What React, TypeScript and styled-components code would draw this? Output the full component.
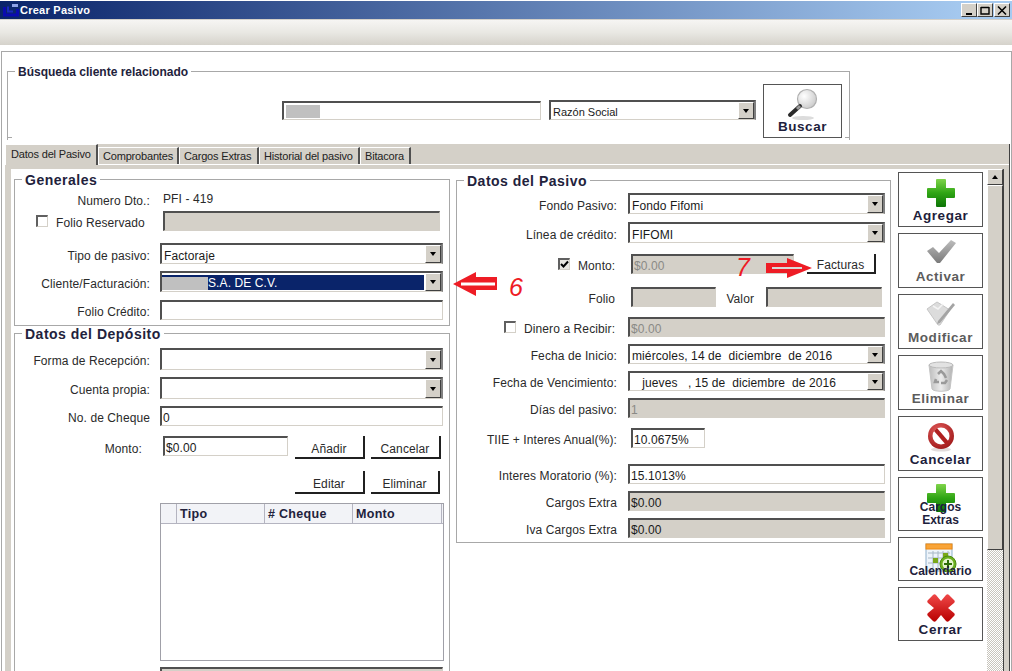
import React from "react";
import styled, { createGlobalStyle } from "styled-components";

const Global = createGlobalStyle`
  html, body { margin: 0; padding: 0; background: #fff; }
  * { box-sizing: border-box; }
  #root { width: 1012px; height: 671px; overflow: hidden; }
`;

const FONT = `"Liberation Sans", Arial, sans-serif`;

const Win = styled.div`
  position: relative;
  width: 1012px;
  height: 671px;
  overflow: hidden;
  display: flex;
  flex-direction: column;
  background: #fff;
  font-family: ${FONT};
  font-size: 12px;
  letter-spacing: 0.1px;
  color: #2a2a2a;
  padding-top: 1px;
`;

const TitleBar = styled.div`
  height: 19px;
  flex: none;
  display: flex;
  align-items: center;
  padding: 0 2px 0 3px;
  background: linear-gradient(90deg, #0a246a 0%, #a6caf0 96%);
  border-bottom: 1px solid #d4d0c8;
`;
const TitleText = styled.span`
  color: #fff;
  font-weight: 700;
  font-size: 11px;
  letter-spacing: 0.25px;
  margin-left: 1px;
  flex: 1;
`;
const WinBtn = styled.div<{ $ml?: number }>`
  width: 16px;
  height: 14px;
  margin-left: ${(p) => p.$ml ?? 0}px;
  background: #d4d0c8;
  border: 1px solid;
  border-color: #fff #404040 #404040 #fff;
  display: flex;
  align-items: center;
  justify-content: center;
`;
const Toolbar = styled.div`
  height: 25px;
  flex: none;
  background: linear-gradient(180deg, #f6f5f3 0%, #e9e8e3 50%, #d5d2cb 100%);
`;
const Body = styled.div`
  flex: 1;
  min-height: 0;
  margin: 6px 0 0 1px;
  border: 1px solid #a8a8a8;
  border-bottom: 0;
  display: flex;
  flex-direction: column;
`;

const Group = styled.fieldset<{ $w: number; $h?: number }>`
  margin: 0;
  padding: 0;
  min-width: 0;
  width: ${(p) => p.$w}px;
  ${(p) => (p.$h ? `height: ${p.$h}px;` : "")}
  border: 1px solid #a8a8a8;
  flex: none;
`;
const Legend = styled.legend`
  margin-left: 7px;
  padding: 0 3px;
  font-weight: 700;
  font-size: 14px;
  height: 14px;
  line-height: 16px;
  letter-spacing: 0.5px;
  color: #22223c;
`;
const SmallLegend = styled(Legend)`
  font-size: 12px;
  letter-spacing: 0;
`;

const SearchGroup = styled(Group)`
  position: relative;
  margin: 12px 0 0 5px;
  border-bottom: 0;
  &::before, &::after {
    content: "";
    position: absolute;
    bottom: 0;
    width: 5px;
    height: 1px;
    background: #a8a8a8;
  }
  &::before { left: -1px; }
  &::after { right: -1px; }
`;
const SearchRow = styled.div`
  display: flex;
  align-items: flex-start;
  padding: 6px 0 0 274px;
`;
const RedactBlock = styled.span<{ $w: number; $lift?: boolean }>`
  display: inline-block;
  width: ${(p) => p.$w}px;
  height: 13px;
  background: #c0c0c0;
  flex: none;
  ${(p) => (p.$lift ? "margin: -3px 0 0 1px;" : "")}
`;
const SmallText = styled.span`
  font-size: 11px;
  letter-spacing: 0;
`;

const Field = styled.div<{ $w: number; $h?: number; $off?: boolean; $muted?: boolean; $ml?: number; $mt?: number }>`
  width: ${(p) => p.$w}px;
  height: ${(p) => p.$h ?? 20}px;
  margin-left: ${(p) => p.$ml ?? 0}px;
  margin-top: ${(p) => p.$mt ?? 0}px;
  flex: none;
  display: flex;
  align-items: center;
  padding: 3px 0 0 1px;
  background: ${(p) => (p.$off ? "#d4d0c8" : "#fff")};
  color: ${(p) => (p.$muted ? "#8a8a86" : "#1a1a1a")};
  border-style: solid;
  border-width: 2px 1px 1px 2px;
  border-color: #505050 #d4d0c8 #d4d0c8 #505050;
  white-space: pre;
  overflow: hidden;
`;
const SelectBox = styled.div<{ $w: number; $h?: number; $ml?: number; $mt?: number }>`
  width: ${(p) => p.$w}px;
  height: ${(p) => p.$h ?? 21}px;
  margin-left: ${(p) => p.$ml ?? 0}px;
  margin-top: ${(p) => p.$mt ?? 0}px;
  flex: none;
  display: flex;
  align-items: stretch;
  background: #fff;
  border-style: solid;
  border-width: 2px 2px 1px 2px;
  border-color: #505050 #808080 #d4d0c8 #505050;
  color: #1a1a1a;
`;
const SelectValue = styled.div<{ $sel?: boolean }>`
  flex: 1;
  min-width: 0;
  display: flex;
  align-items: center;
  white-space: pre;
  padding: 3px 0 0 2px;
  ${(p) => (p.$sel ? "background:#0a246a;color:#fff;margin:2px 1px 1px 0;padding:1px 0 0 0;overflow:visible;" : "")}
`;
const DropBtn = styled.div`
  width: 16px;
  flex: none;
  background: #d4d0c8;
  border: 1px solid;
  border-color: #fff #404040 #404040 #fff;
  display: flex;
  align-items: center;
  justify-content: center;
  &::after {
    content: "";
    border-style: solid;
    border-width: 4px 3.5px 0 3.5px;
    border-color: #000 transparent transparent transparent;
  }
`;
const Select: React.FC<{ w: number; h?: number; ml?: number; mt?: number; sel?: boolean; children?: React.ReactNode }> = ({ w, h, ml, mt, sel, children }) => (
  <SelectBox $w={w} $h={h} $ml={ml} $mt={mt}>
    <SelectValue $sel={sel}>{children}</SelectValue>
    <DropBtn />
  </SelectBox>
);

const BigBtn = styled.div<{ $off?: boolean; $h: number; $small?: boolean }>`
  width: 85px;
  height: ${(p) => p.$h}px;
  flex: none;
  background: #fff;
  border: 1px solid #555;
  display: flex;
  flex-direction: column;
  align-items: center;
  padding-top: 5px;
  font-weight: 700;
  font-size: ${(p) => (p.$small ? 12 : 13.5)}px;
  line-height: 13px;
  letter-spacing: ${(p) => (p.$small ? 0 : 0.55)}px;
  text-align: center;
  color: ${(p) => (p.$off ? "#5c5c5c" : "#1e1e3c")};
`;
const IconSlot = styled.div<{ $h: number }>`
  height: ${(p) => p.$h}px;
  flex: none;
  display: flex;
  justify-content: center;
`;
const BuscarBtn = styled(BigBtn)`
  width: 79px;
  margin-left: 7px;
  padding-top: 3px;
`;

const Tabs = styled.div`
  margin: 4px 0 0 3px;
  width: 1005px;
  flex: 1;
  min-height: 0;
  display: flex;
  flex-direction: column;
  background: #d4d0c8;
  border-right: 1px solid #404040;
`;
const TabStrip = styled.div`
  height: 21px;
  flex: none;
  display: flex;
  align-items: flex-end;
  border-bottom: 1px solid #fff;
`;
const Tab = styled.div<{ $w: number; $on?: boolean }>`
  width: ${(p) => p.$w}px;
  height: ${(p) => (p.$on ? 21 : 17)}px;
  flex: none;
  margin-bottom: ${(p) => (p.$on ? -1 : 0)}px;
  position: relative;
  background: #d4d0c8;
  font-size: 11px;
  letter-spacing: -0.18px;
  color: #222;
  display: flex;
  align-items: ${(p) => (p.$on ? "flex-start" : "center")};
  padding: ${(p) => (p.$on ? "3px 0 0 5px" : "0 0 0 4px")};
  border-style: solid;
  border-width: 1px 2px 0 1px;
  border-color: #fff #505050 transparent #fff;
  white-space: nowrap;
`;
const TabBody = styled.div`
  flex: 1;
  min-height: 0;
  display: flex;
  padding: 4px 5px 0 6px;
`;
const Content = styled.div`
  flex: 1;
  min-width: 0;
  background: #fff;
  display: flex;
  align-items: flex-start;
  padding: 3px 0 0 3px;
`;
const LeftCol = styled.div`
  width: 436px;
  flex: none;
  display: flex;
  flex-direction: column;
`;
const MidCol = styled.div`
  width: 435px;
  margin: 1px 0 0 6px;
  flex: none;
`;
const Actions = styled.div`
  margin-left: 7px;
  flex: none;
  display: flex;
  flex-direction: column;
  gap: 6px;
`;

const Row = styled.div<{ $h: number; $mt?: number; $top?: boolean }>`
  display: flex;
  align-items: ${(p) => (p.$top ? "flex-start" : "center")};
  height: ${(p) => p.$h}px;
  margin-top: ${(p) => p.$mt ?? 0}px;
`;
const Label = styled.div<{ $w: number; $ml?: number }>`
  width: ${(p) => p.$w}px;
  margin-left: ${(p) => p.$ml ?? 0}px;
  padding-top: 4px;
  flex: none;
  text-align: right;
  white-space: nowrap;
`;
const MontoLabel = styled(Label)`
  line-height: 18px;
`;
const CheckGroup = styled.div<{ $w: number; $pl: number }>`
  width: ${(p) => p.$w}px;
  padding-left: ${(p) => p.$pl}px;
  flex: none;
  display: flex;
  align-items: center;
  gap: 8px;
  white-space: nowrap;
`;
const CheckText = styled.span`
  padding-top: 4px;
`;
const Check = styled.div<{ $on?: boolean }>`
  width: 12px;
  height: 12px;
  flex: none;
  margin-top: -1px;
  background: ${(p) => (p.$on ? "#e8e6e0" : "#fff")};
  border-style: solid;
  border-width: 2px 1px 1px 2px;
  border-color: #606060 #d4d0c8 #d4d0c8 #606060;
  display: flex;
`;
const Value = styled.div`
  margin-left: 13px;
`;
const FlatBtn = styled.div<{ $w: number; $ml: number; $h?: number }>`
  width: ${(p) => p.$w}px;
  height: ${(p) => p.$h ?? 23}px;
  margin-left: ${(p) => p.$ml}px;
  flex: none;
  background: #fff;
  border-right: 2px solid #202020;
  border-bottom: 2px solid #202020;
  display: flex;
  align-items: center;
  justify-content: center;
  padding-top: 4px;
`;
const GridBox = styled.div`
  width: 284px;
  height: 158px;
  margin: 9px 0 0 145px;
  border: 1px solid #a0a0a8;
  background: #fff;
`;
const GridHead = styled.div`
  height: 20px;
  display: grid;
  grid-template-columns: 16px 88px 88px 89px;
  background: #f2f3f7;
  border-bottom: 1px solid #b4b4c0;
`;
const GridCol = styled.div`
  border-right: 1px solid #b4b4c0;
  font-weight: 700;
  font-size: 12.5px;
  letter-spacing: 0.3px;
  line-height: 20px;
  padding-left: 3px;
  color: #22223c;
  white-space: nowrap;
`;
const ScrollBar = styled.div`
  width: 17px;
  flex: none;
  display: flex;
  flex-direction: column;
  background: repeating-conic-gradient(#c8c5bd 0 25%, #fff 0 50%) 0 0 / 2px 2px;
  border-right: 1px solid #404040;
`;
const ScrollUp = styled.div`
  height: 16px;
  flex: none;
  background: #d4d0c8;
  border: 1px solid;
  border-color: #fff #404040 #404040 #fff;
  display: flex;
  align-items: center;
  justify-content: center;
  &::after {
    content: "";
    border-style: solid;
    border-width: 0 3.5px 4px 3.5px;
    border-color: transparent transparent #000 transparent;
  }
`;
const ScrollThumb = styled.div`
  height: 365px;
  flex: none;
  background: #d4d0c8;
  border: 1px solid;
  border-color: #fff #404040 #404040 #fff;
`;
const Marker = styled.svg<{ $x: number; $y: number }>`
  position: absolute;
  left: ${(p) => p.$x}px;
  top: ${(p) => p.$y}px;
`;
const Digit = styled.span<{ $x: number; $y: number }>`
  position: absolute;
  left: ${(p) => p.$x}px;
  top: ${(p) => p.$y}px;
  color: #ee1c25;
  font-family: ${FONT};
  font-style: italic;
  font-size: 25px;
  line-height: 24px;
  letter-spacing: 0;
`;

/* ---------- icons ---------- */
const Plus = () => (
  <svg width="30" height="30" viewBox="0 0 30 30">
    <defs>
      <linearGradient id="gp" x1="0" y1="0" x2="0" y2="1">
        <stop offset="0" stopColor="#7fd44a" />
        <stop offset=".5" stopColor="#2fa514" />
        <stop offset="1" stopColor="#0c7407" />
      </linearGradient>
    </defs>
    <path d="M11 1h8a1 1 0 0 1 1 1v8h8a1 1 0 0 1 1 1v8a1 1 0 0 1-1 1h-8v8a1 1 0 0 1-1 1h-8a1 1 0 0 1-1-1v-8H2a1 1 0 0 1-1-1v-8a1 1 0 0 1 1-1h8V2a1 1 0 0 1 1-1z" fill="url(#gp)" />
  </svg>
);
const CheckIcon = () => (
  <svg width="30" height="26" viewBox="0 0 30 26">
    <defs>
      <linearGradient id="gc" x1="0" y1="0" x2="0" y2="1">
        <stop offset="0" stopColor="#bdbdbd" />
        <stop offset="1" stopColor="#7a7a7a" />
      </linearGradient>
    </defs>
    <path d="M1 12l6-4 6 6L25 1l5 3-16 20h-3z" fill="url(#gc)" />
  </svg>
);
const NoteIcon = () => (
  <svg width="32" height="28" viewBox="0 0 32 28">
    <path d="M2 9l10-7 5 3 8 5-10 15h-2z" fill="#dcdcdc" stroke="#c6c6c6" />
    <path d="M8 6l5 3 5-5" fill="none" stroke="#f4f4f4" strokeWidth="1.5" />
    <path d="M13 21L28 3l2 2-15 18-3 1z" fill="#a4a4a4" />
  </svg>
);
const TrashIcon = () => (
  <svg width="28" height="32" viewBox="0 0 28 32">
    <defs>
      <linearGradient id="gt" x1="0" y1="0" x2="1" y2="0">
        <stop offset="0" stopColor="#bcbcbc" />
        <stop offset=".5" stopColor="#ececec" />
        <stop offset="1" stopColor="#b0b0b0" />
      </linearGradient>
    </defs>
    <path d="M2 4l3 24c1 3 17 3 18 0l3-24z" fill="url(#gt)" stroke="#c4c4c4" />
    <ellipse cx="14" cy="4" rx="12" ry="3" fill="#e2e2e2" stroke="#bababa" />
    <path d="M11 13l3-3 3 3 2 4M9 18l-1 3h4M20 19l-2 3h-4" fill="none" stroke="#9a9a9a" strokeWidth="2.6" />
  </svg>
);
const NoIcon = () => (
  <svg width="28" height="30" viewBox="0 0 28 30">
    <defs>
      <radialGradient id="gn" cx=".4" cy=".3" r=".8">
        <stop offset="0" stopColor="#e25a5a" />
        <stop offset="1" stopColor="#9a1414" />
      </radialGradient>
    </defs>
    <ellipse cx="14" cy="27.5" rx="10" ry="2" fill="#e2dcdc" />
    <circle cx="14" cy="14" r="13" fill="url(#gn)" />
    <circle cx="14" cy="14" r="8.5" fill="#fff" />
    <path d="M7 9l3-3 12 14-3 3z" fill="#b02020" />
  </svg>
);
const XIcon = () => (
  <svg width="30" height="30" viewBox="0 0 30 30">
    <defs>
      <linearGradient id="gx" x1="0" y1="0" x2="0" y2="1">
        <stop offset="0" stopColor="#f04848" />
        <stop offset="1" stopColor="#b80000" />
      </linearGradient>
    </defs>
    <path d="M2 7l5-5c1-1 2-1 3 0l5 6 5-6c1-1 2-1 3 0l5 5c1 1 1 2 0 3l-6 5 6 5c1 1 1 2 0 3l-5 5c-1 1-2 1-3 0l-5-6-5 6c-1 1-2 1-3 0l-5-5c-1-1-1-2 0-3l6-5-6-5c-1-1-1-2 0-3z" fill="url(#gx)" />
  </svg>
);
const CalIcon = () => (
  <svg width="32" height="30" viewBox="0 0 32 30">
    <rect x="1" y="1" width="26" height="27" fill="#eef4fa" stroke="#8fb0cc" />
    <rect x="1" y="1" width="26" height="5" fill="#f8a438" stroke="#f08a10" />
    <path d="M3 10h22M3 15h22M3 20h22M8 8v17M13 8v17M18 8v17M23 8v17" stroke="#a8b8c6" fill="none" />
    <rect x="8" y="15" width="5" height="5" fill="#7aa818" />
    <rect x="18" y="10" width="5" height="5" fill="#7aa818" />
    <circle cx="23" cy="21" r="8" fill="#6cb01e" stroke="#4c8a10" />
    <circle cx="23" cy="21" r="5.5" fill="#e6f4d0" />
    <path d="M23 17v8M19 21h8" stroke="#2e6e08" strokeWidth="2" />
  </svg>
);
const Lens = () => (
  <svg width="32" height="34" viewBox="0 0 32 34">
    <defs>
      <radialGradient id="gl" cx=".35" cy=".35" r=".8">
        <stop offset="0" stopColor="#ffffff" />
        <stop offset="1" stopColor="#c4c4c4" />
      </radialGradient>
    </defs>
    <ellipse cx="16" cy="30" rx="11" ry="2" fill="#dcdcdc" />
    <circle cx="20" cy="11" r="9.5" fill="url(#gl)" stroke="#b0b0b0" strokeWidth="1.2" />
    <path d="M13 18L3 27" stroke="#2a2a2a" strokeWidth="4" strokeLinecap="round" />
    <path d="M13 18l-3 3" stroke="#9a9a9a" strokeWidth="3" />
  </svg>
);
const LogoIcon = () => (
  <svg width="16" height="15" viewBox="0 0 16 15">
    <path d="M1.5 4v8h13V6" fill="none" stroke="#0b0bb0" strokeWidth="3" />
    <path d="M5 3.5v5h5" fill="none" stroke="#1a2ac0" strokeWidth="2" />
    <path d="M9 2.5h6" fill="none" stroke="#8ea2e6" strokeWidth="3" />
  </svg>
);
const Tick = () => (
  <svg width="9" height="9" viewBox="0 0 9 9">
    <path d="M1 4l2.5 2.5L8 1.5" fill="none" stroke="#000" strokeWidth="2" />
  </svg>
);

export default function App() {
  return (
    <Win>
      <Global />
      <TitleBar>
        <LogoIcon />
        <TitleText>Crear Pasivo</TitleText>
        <WinBtn>
          <svg width="10" height="9" viewBox="0 0 10 9"><path d="M2 8h6" stroke="#000" strokeWidth="2" /></svg>
        </WinBtn>
        <WinBtn>
          <svg width="10" height="9" viewBox="0 0 10 9"><path d="M1 1.5h8M1 1v7h8V1" fill="none" stroke="#000" strokeWidth="1.4" /></svg>
        </WinBtn>
        <WinBtn $ml={1}>
          <svg width="10" height="9" viewBox="0 0 10 9"><path d="M1 0.5l8 8M9 0.5l-8 8" stroke="#000" strokeWidth="1.5" /></svg>
        </WinBtn>
      </TitleBar>
      <Toolbar />
      <Body>
        <SearchGroup $w={843} $h={76}>
          <SmallLegend>Búsqueda cliente relacionado</SmallLegend>
          <SearchRow>
            <Field $w={259} $mt={17} $h={19}>
              <RedactBlock $w={34} $lift />
            </Field>
            <Select w={207} ml={8} mt={16} h={20}><SmallText>Razón Social</SmallText></Select>
            <BuscarBtn $h={54}>
              <IconSlot $h={32}><Lens /></IconSlot>
              Buscar
            </BuscarBtn>
          </SearchRow>
        </SearchGroup>

        <Tabs>
          <TabStrip>
            <Tab $w={93} $on>Datos del Pasivo</Tab>
            <Tab $w={81}>Comprobantes</Tab>
            <Tab $w={80}>Cargos Extras</Tab>
            <Tab $w={101}>Historial del pasivo</Tab>
            <Tab $w={51}>Bitacora</Tab>
          </TabStrip>
          <TabBody>
            <Content>
              <LeftCol>
                <Group $w={436} $h={154}>
                  <Legend>Generales</Legend>
                  <Row $h={14} $mt={6}>
                    <Label $w={135}>Numero Dto.:</Label>
                    <Value>PFI - 419</Value>
                  </Row>
                  <Row $h={20} $mt={5}>
                    <CheckGroup $w={148} $pl={21}>
                      <Check />
                      <CheckText>Folio Reservado</CheckText>
                    </CheckGroup>
                    <Field $w={277} $off />
                  </Row>
                  <Row $h={21} $mt={12}>
                    <Label $w={135}>Tipo de pasivo:</Label>
                    <Select w={283} ml={10}>Factoraje</Select>
                  </Row>
                  <Row $h={21} $mt={7}>
                    <Label $w={135}>Cliente/Facturación:</Label>
                    <Select w={283} ml={10} sel>
                      <RedactBlock $w={46} />S.A. DE C.V.
                    </Select>
                  </Row>
                  <Row $h={20} $mt={8}>
                    <Label $w={135}>Folio Crédito:</Label>
                    <Field $w={283} $ml={10} />
                  </Row>
                </Group>
                <Group $w={436} $h={400}>
                  <Legend>Datos del Depósito</Legend>
                  <Row $h={22} $mt={8}>
                    <Label $w={135}>Forma de Recepción:</Label>
                    <Select w={283} ml={10} h={22} />
                  </Row>
                  <Row $h={22} $mt={7}>
                    <Label $w={135}>Cuenta propia:</Label>
                    <Select w={283} ml={10} h={22} />
                  </Row>
                  <Row $h={20} $mt={7}>
                    <Label $w={135}>No. de Cheque</Label>
                    <Field $w={283} $ml={10}>0</Field>
                  </Row>
                  <Row $h={23} $mt={10} $top>
                    <MontoLabel $w={127}>Monto:</MontoLabel>
                    <Field $w={125} $ml={21}>$0.00</Field>
                    <FlatBtn $w={70} $ml={7}>Añadir</FlatBtn>
                    <FlatBtn $w={70} $ml={6}>Cancelar</FlatBtn>
                  </Row>
                  <Row $h={23} $mt={12}>
                    <FlatBtn $w={70} $ml={280}>Editar</FlatBtn>
                    <FlatBtn $w={69} $ml={6}>Eliminar</FlatBtn>
                  </Row>
                  <GridBox>
                    <GridHead>
                      <GridCol />
                      <GridCol>Tipo</GridCol>
                      <GridCol># Cheque</GridCol>
                      <GridCol>Monto</GridCol>
                    </GridHead>
                  </GridBox>
                  <Row $h={20} $mt={6}>
                    <Field $w={283} $ml={145} $off />
                  </Row>
                </Group>
              </LeftCol>

              <MidCol>
                <Group $w={435} $h={370}>
                  <Legend>Datos del Pasivo</Legend>
                  <Row $h={21} $mt={6}>
                    <Label $w={160}>Fondo Pasivo:</Label>
                    <Select w={257} ml={11}>Fondo Fifomi</Select>
                  </Row>
                  <Row $h={21} $mt={8}>
                    <Label $w={160}>Línea de crédito:</Label>
                    <Select w={257} ml={11}>FIFOMI</Select>
                  </Row>
                  <Row $h={20} $mt={11}>
                    <CheckGroup $w={174} $pl={101}>
                      <Check $on><Tick /></Check>
                      <CheckText>Monto:</CheckText>
                    </CheckGroup>
                    <Field $w={163} $off $muted>$0.00</Field>
                    <FlatBtn $w={69} $ml={13} $h={20}>Facturas</FlatBtn>
                  </Row>
                  <Row $h={20} $mt={13}>
                    <Label $w={158}>Folio</Label>
                    <Field $w={85} $ml={16} $off />
                    <Label $w={28} $ml={10}>Valor</Label>
                    <Field $w={116} $ml={12} $off />
                  </Row>
                  <Row $h={20} $mt={10}>
                    <CheckGroup $w={171} $pl={47}>
                      <Check />
                      <CheckText>Dinero a Recibir:</CheckText>
                    </CheckGroup>
                    <Field $w={257} $off $muted>$0.00</Field>
                  </Row>
                  <Row $h={20} $mt={7}>
                    <Label $w={160}>Fecha de Inicio:</Label>
                    <Select w={257} ml={11} h={20}>miércoles, 14 de  diciembre  de 2016</Select>
                  </Row>
                  <Row $h={20} $mt={7}>
                    <Label $w={160}>Fecha de Vencimiento:</Label>
                    <Select w={257} ml={11} h={20}>{"   jueves   , 15 de  diciembre  de 2016"}</Select>
                  </Row>
                  <Row $h={20} $mt={7}>
                    <Label $w={160}>Días del pasivo:</Label>
                    <Field $w={257} $ml={11} $off $muted>1</Field>
                  </Row>
                  <Row $h={20} $mt={10}>
                    <Label $w={160}>TIIE + Interes Anual(%):</Label>
                    <Field $w={74} $ml={14}>10.0675%</Field>
                  </Row>
                  <Row $h={20} $mt={16}>
                    <Label $w={160}>Interes Moratorio (%):</Label>
                    <Field $w={257} $ml={11}>15.1013%</Field>
                  </Row>
                  <Row $h={20} $mt={7}>
                    <Label $w={160}>Cargos Extra</Label>
                    <Field $w={257} $ml={11} $off>$0.00</Field>
                  </Row>
                  <Row $h={20} $mt={7}>
                    <Label $w={160}>Iva Cargos Extra</Label>
                    <Field $w={257} $ml={11} $off>$0.00</Field>
                  </Row>
                </Group>
              </MidCol>

              <Actions>
                <BigBtn $h={55}><IconSlot $h={31}><Plus /></IconSlot>Agregar</BigBtn>
                <BigBtn $h={55} $off><IconSlot $h={31}><CheckIcon /></IconSlot>Activar</BigBtn>
                <BigBtn $h={55} $off><IconSlot $h={31}><NoteIcon /></IconSlot>Modificar</BigBtn>
                <BigBtn $h={55} $off><IconSlot $h={31}><TrashIcon /></IconSlot>Eliminar</BigBtn>
                <BigBtn $h={55}><IconSlot $h={31}><NoIcon /></IconSlot>Cancelar</BigBtn>
                <BigBtn $h={54} $small><IconSlot $h={18}><Plus /></IconSlot>Cargos<br />Extras</BigBtn>
                <BigBtn $h={44} $small><IconSlot $h={22}><CalIcon /></IconSlot>Calendario</BigBtn>
                <BigBtn $h={54}><IconSlot $h={30}><XIcon /></IconSlot>Cerrar</BigBtn>
              </Actions>
            </Content>
            <ScrollBar>
              <ScrollUp />
              <ScrollThumb />
            </ScrollBar>
          </TabBody>
        </Tabs>
      </Body>

      <Marker $x={453} $y={272} width="45" height="24" viewBox="0 0 45 24">
        <path d="M0 12L23 0v5h21v13H23v6z" fill="#ee1c25" />
        <path d="M8 12h34" stroke="#fff" strokeWidth="3" />
      </Marker>
      <Digit $x={509} $y={275}>6</Digit>
      <Marker $x={766} $y={258} width="47" height="20" viewBox="0 0 47 20">
        <path d="M46 10L21 0v5H0v10h21v5z" fill="#ee1c25" />
        <path d="M6 10h30" stroke="#d8d8d8" strokeWidth="2" />
      </Marker>
      <Digit $x={736} $y={255}>7</Digit>
    </Win>
  );
}
